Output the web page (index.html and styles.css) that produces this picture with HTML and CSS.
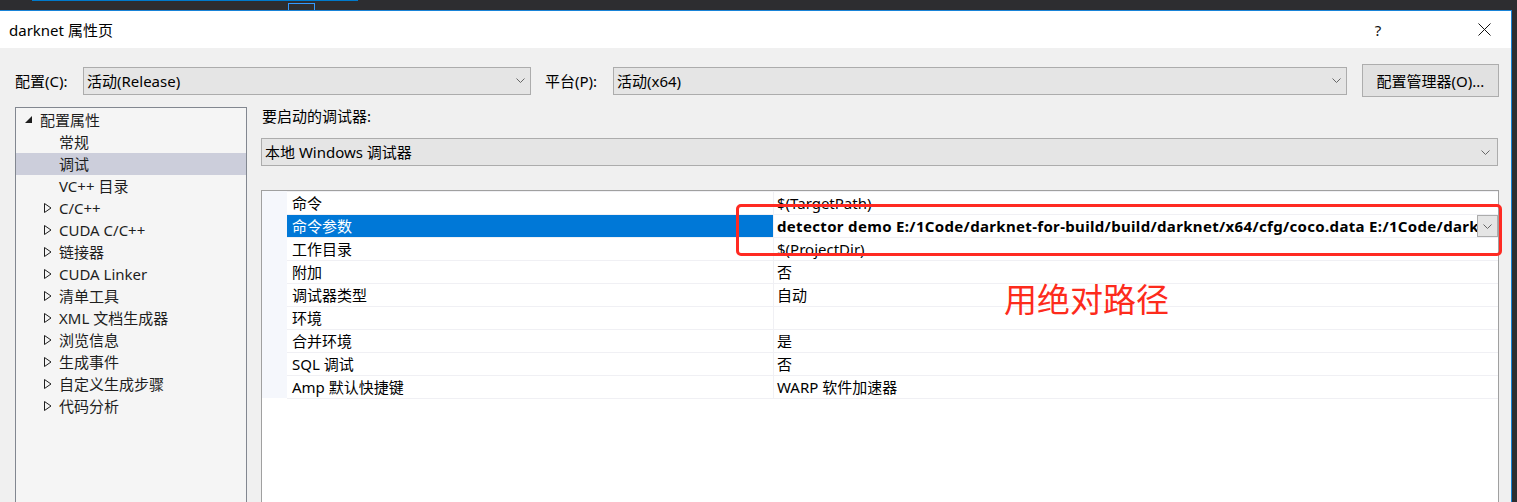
FILE: index.html
```html
<!DOCTYPE html>
<html lang="zh-CN">
<head>
<meta charset="utf-8">
<title>darknet 属性页</title>
<link rel="stylesheet" href="styles.css">
</head>
<body>
<div class="host">
  <div class="host-line"></div>
  <div class="host-box"></div>
</div>
<div class="dialog">
  <div class="titlebar">
    <span class="title">darknet 属性页</span>
    <span class="tb-help">?</span>
    <span class="tb-close"><svg width="13" height="13" viewBox="0 0 13 13"><path d="M0.5 0.5 L12.5 12.5 M12.5 0.5 L0.5 12.5" stroke="#111" stroke-width="1" fill="none"/></svg></span>
  </div>
  <div class="content">
    <div class="config-row">
      <span class="cfg-label">配置(C):</span>
      <div class="combo cfg-combo"><span>活动(Release)</span><svg class="chev" width="9" height="5" viewBox="0 0 9 5"><polyline points="0.5,0.5 4.5,4.5 8.5,0.5" stroke="#666" fill="none"/></svg></div>
      <span class="cfg-label plat">平台(P):</span>
      <div class="combo plat-combo"><span>活动(x64)</span><svg class="chev" width="9" height="5" viewBox="0 0 9 5"><polyline points="0.5,0.5 4.5,4.5 8.5,0.5" stroke="#666" fill="none"/></svg></div>
      <div class="btn">配置管理器(O)...</div>
    </div>
    <div class="main">
      <div class="tree">
        <div class="ti root"><span class="gl"><svg width="8" height="8" viewBox="0 0 8 8"><polygon points="8,0 8,7 1,7" fill="#1e1e1e"/></svg></span>配置属性</div>
        <div class="ti leaf">常规</div>
        <div class="ti leaf sel">调试</div>
        <div class="ti leaf">VC++ 目录</div>
        <div class="ti child"><span class="gl"><svg width="8" height="10" viewBox="0 0 8 10"><polygon points="0.5,0.5 7,5 0.5,9.5" fill="none" stroke="#1e1e1e"/></svg></span>C/C++</div>
        <div class="ti child"><span class="gl"><svg width="8" height="10" viewBox="0 0 8 10"><polygon points="0.5,0.5 7,5 0.5,9.5" fill="none" stroke="#1e1e1e"/></svg></span>CUDA C/C++</div>
        <div class="ti child"><span class="gl"><svg width="8" height="10" viewBox="0 0 8 10"><polygon points="0.5,0.5 7,5 0.5,9.5" fill="none" stroke="#1e1e1e"/></svg></span>链接器</div>
        <div class="ti child"><span class="gl"><svg width="8" height="10" viewBox="0 0 8 10"><polygon points="0.5,0.5 7,5 0.5,9.5" fill="none" stroke="#1e1e1e"/></svg></span>CUDA Linker</div>
        <div class="ti child"><span class="gl"><svg width="8" height="10" viewBox="0 0 8 10"><polygon points="0.5,0.5 7,5 0.5,9.5" fill="none" stroke="#1e1e1e"/></svg></span>清单工具</div>
        <div class="ti child"><span class="gl"><svg width="8" height="10" viewBox="0 0 8 10"><polygon points="0.5,0.5 7,5 0.5,9.5" fill="none" stroke="#1e1e1e"/></svg></span>XML 文档生成器</div>
        <div class="ti child"><span class="gl"><svg width="8" height="10" viewBox="0 0 8 10"><polygon points="0.5,0.5 7,5 0.5,9.5" fill="none" stroke="#1e1e1e"/></svg></span>浏览信息</div>
        <div class="ti child"><span class="gl"><svg width="8" height="10" viewBox="0 0 8 10"><polygon points="0.5,0.5 7,5 0.5,9.5" fill="none" stroke="#1e1e1e"/></svg></span>生成事件</div>
        <div class="ti child"><span class="gl"><svg width="8" height="10" viewBox="0 0 8 10"><polygon points="0.5,0.5 7,5 0.5,9.5" fill="none" stroke="#1e1e1e"/></svg></span>自定义生成步骤</div>
        <div class="ti child"><span class="gl"><svg width="8" height="10" viewBox="0 0 8 10"><polygon points="0.5,0.5 7,5 0.5,9.5" fill="none" stroke="#1e1e1e"/></svg></span>代码分析</div>
      </div>
      <div class="pane">
        <div class="pane-label">要启动的调试器:</div>
        <div class="combo wide"><span>本地 Windows 调试器</span><svg class="chev" width="9" height="5" viewBox="0 0 9 5"><polyline points="0.5,0.5 4.5,4.5 8.5,0.5" stroke="#666" fill="none"/></svg></div>
        <div class="grid">
          <div class="row"><div class="mg"></div><div class="nm">命令</div><div class="vl">$(TargetPath)</div></div>
          <div class="row"><div class="mg"></div><div class="nm sel">命令参数</div><div class="vl edit"><span class="vt">detector demo E:/1Code/darknet-for-build/build/darknet/x64/cfg/coco.data E:/1Code/darknet-for-build/build/darknet/x64/cfg/yolov3.cfg</span><span class="dd"><svg width="9" height="5" viewBox="0 0 9 5"><polyline points="0.5,0.5 4.5,4.5 8.5,0.5" stroke="#666" fill="none"/></svg></span></div></div>
          <div class="row"><div class="mg"></div><div class="nm">工作目录</div><div class="vl">$(ProjectDir)</div></div>
          <div class="row"><div class="mg"></div><div class="nm">附加</div><div class="vl">否</div></div>
          <div class="row"><div class="mg"></div><div class="nm">调试器类型</div><div class="vl">自动</div></div>
          <div class="row"><div class="mg"></div><div class="nm">环境</div><div class="vl"></div></div>
          <div class="row"><div class="mg"></div><div class="nm">合并环境</div><div class="vl">是</div></div>
          <div class="row"><div class="mg"></div><div class="nm">SQL 调试</div><div class="vl">否</div></div>
          <div class="row last"><div class="mg"></div><div class="nm">Amp 默认快捷键</div><div class="vl">WARP 软件加速器</div></div>
          <div class="mark-box"></div>
          <div class="mark-text">用绝对路径</div>
        </div>
      </div>
    </div>
  </div>
</div>
</body>
</html>
```

FILE: styles.css
```css
html, body {
  margin: 0;
  padding: 0;
}
body {
  width: 1517px;
  height: 502px;
  overflow: hidden;
  background: #2d2d30;
  font-family: "Noto Sans", "Noto Sans CJK SC", sans-serif;
  font-size: 15px;
  color: #000;
}

.host {
  height: 10px;
  overflow: hidden;
  background: #2d2d30;
}
.host-line {
  margin-left: 32px;
  width: 326px;
  height: 1px;
  background: #007acc;
}
.host-box {
  margin-left: 288px;
  margin-top: 2px;
  width: 25px;
  height: 7px;
  border: 1px solid #3399ff;
  border-bottom: none;
}

.dialog {
  width: 1512px;
  height: 492px;
  box-sizing: border-box;
  background: #f0f0f0;
  border-top: 1px solid #1883d7;
  border-right: 1px solid #1883d7;
  display: flex;
  flex-direction: column;
  overflow: hidden;
}

.titlebar {
  height: 37px;
  flex: 0 0 37px;
  background: #fff;
  display: flex;
  align-items: center;
  padding-left: 9px;
  padding-right: 4px;
}
.title {
  font-size: 15px;
  line-height: 20px;
  color: #000;
}
.tb-help {
  margin-left: auto;
  width: 46px;
  text-align: center;
  font-size: 15px;
  line-height: 20px;
  color: #111;
}
.tb-close {
  margin-left: 60px;
  width: 46px;
  display: flex;
  justify-content: center;
  align-items: center;
}

.content {
  flex: 1;
  min-height: 0;
  display: flex;
  flex-direction: column;
  padding: 0 12px 0 15px;
}

.config-row {
  margin-top: 16px;
  height: 33px;
  flex: 0 0 33px;
  display: flex;
  align-items: center;
}
.cfg-label {
  width: 68px;
  flex: 0 0 68px;
  line-height: 20px;
}
.cfg-label.plat {
  margin-left: 14px;
}
.combo {
  box-sizing: border-box;
  height: 28px;
  display: flex;
  align-items: center;
  border: 1px solid #acacac;
  background: #e5e5e5;
  padding-left: 3px;
  line-height: 20px;
}
.combo .chev {
  margin-left: auto;
  margin-right: 5px;
}
.cfg-combo {
  flex: 0 0 448px;
}
.plat-combo {
  flex: 1;
}
.btn {
  margin-left: 15px;
  flex: 0 0 137px;
  box-sizing: border-box;
  height: 33px;
  border: 1px solid #adadad;
  background: #e1e1e1;
  display: flex;
  align-items: center;
  justify-content: center;
  line-height: 20px;
}

.main {
  margin-top: 10px;
  flex: 1;
  min-height: 0;
  display: flex;
  gap: 14px;
}

.tree {
  width: 232px;
  flex: 0 0 232px;
  box-sizing: border-box;
  border: 1px solid #828790;
  border-bottom: none;
  background: #f5f5f5;
  padding-top: 1px;
  color: #1e1e1e;
}
.ti {
  height: 22px;
  display: flex;
  align-items: center;
  line-height: 22px;
  white-space: nowrap;
}
.ti.sel {
  background: #cccedb;
}
.ti.root {
  padding-left: 8px;
}
.ti.root .gl {
  width: 16px;
  display: flex;
  align-items: center;
}
.ti.child {
  padding-left: 28px;
}
.ti.child .gl {
  width: 15px;
  display: flex;
  align-items: center;
}
.ti.leaf {
  padding-left: 43px;
}

.pane {
  width: 1238px;
  flex: 0 0 1238px;
  display: flex;
  flex-direction: column;
}
.pane-label {
  height: 18px;
  line-height: 18px;
  margin-bottom: 13px;
  padding-left: 1px;
}
.combo.wide {
  width: 1237px;
}
.combo.wide .chev {
  margin-right: 7px;
}

.grid {
  position: relative;
  margin-top: 24px;
  flex: 1;
  box-sizing: border-box;
  border: 1px solid #a0a0a0;
  border-bottom: none;
  background: #fff;
}
.row {
  display: flex;
  height: 23px;
}
.mg {
  width: 25px;
  flex: 0 0 25px;
  background: #f5f7fc;
}
.nm, .vl {
  box-sizing: border-box;
  border-top: 1px solid #f0f0f4;
  line-height: 22px;
  white-space: nowrap;
  overflow: hidden;
}
.row.last .nm, .row.last .vl {
  border-bottom: 1px solid #f0f0f4;
  height: 24px;
}
.nm {
  width: 487px;
  flex: 0 0 487px;
  padding-left: 5px;
  border-right: 1px solid #f0f0f4;
}
.nm.sel {
  background: #0078d7;
  color: #fff;
}
.vl {
  flex: 1;
  padding-left: 3px;
  min-width: 0;
}
.vl.edit {
  display: flex;
  align-items: stretch;
  font-weight: bold;
  padding-right: 0;
}
.vt {
  flex: 1;
  min-width: 0;
  overflow: hidden;
  white-space: nowrap;
  letter-spacing: 0.33px;
}
.dd {
  flex: 0 0 21px;
  box-sizing: border-box;
  border: 1px solid #acacac;
  background: #e5e5e5;
  display: flex;
  align-items: center;
  justify-content: center;
}

.mark-box {
  position: absolute;
  left: 474px;
  top: 13px;
  width: 766px;
  height: 52px;
  box-sizing: border-box;
  border: 3px solid #ff2a22;
  border-radius: 5px;
}
.mark-text {
  position: absolute;
  left: 742px;
  top: 92px;
  font-size: 33px;
  line-height: 33px;
  color: #fd2b1c;
  white-space: nowrap;
}
```
